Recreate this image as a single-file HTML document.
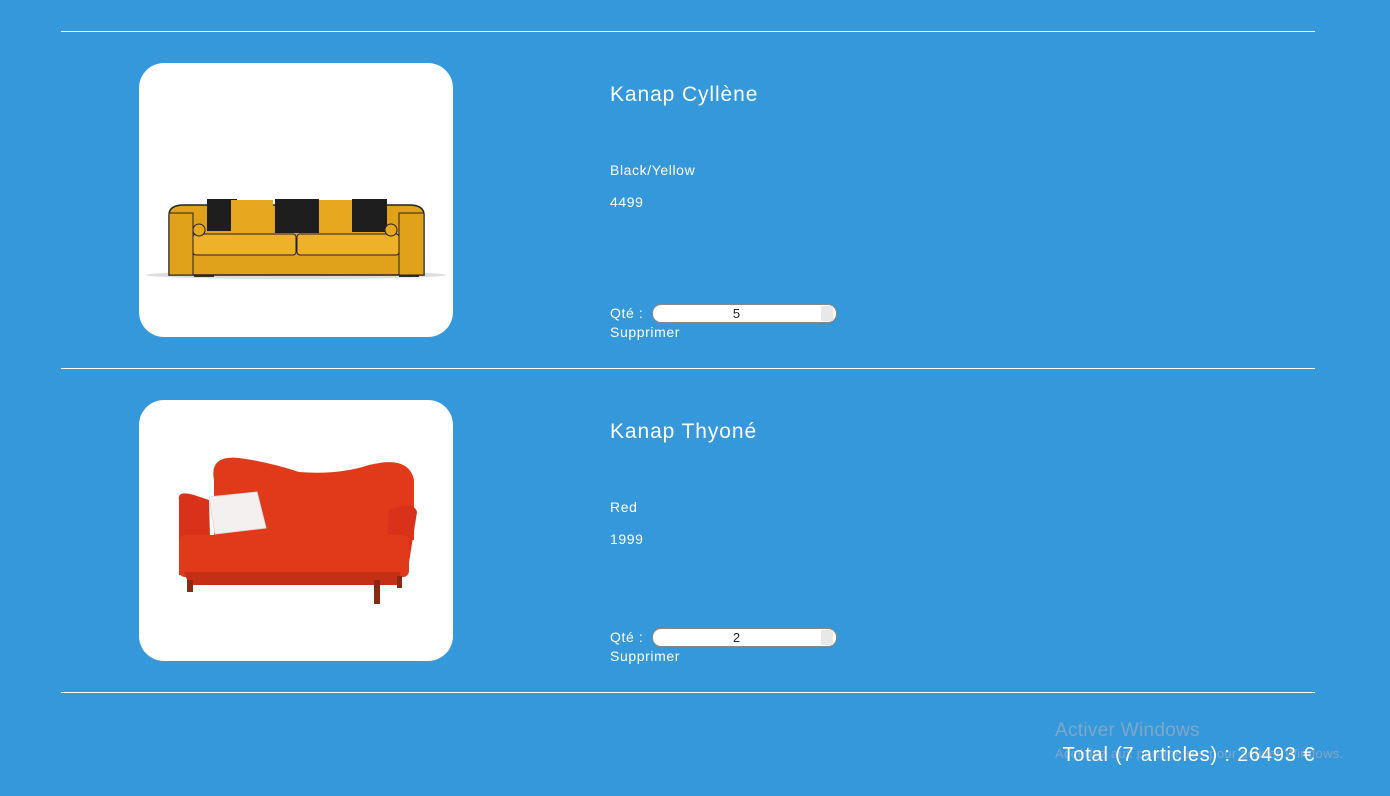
<!DOCTYPE html>
<html><head><meta charset="utf-8"><style>
body{margin:0;background:#3498db;width:1390px;height:796px;overflow:hidden;font-family:"Liberation Sans",sans-serif;color:#fff;position:relative}
.hr{position:absolute;left:61px;width:1254px;height:1px;background:#fff}
.img{position:absolute;left:139px;width:314px;background:#fff;border-radius:25px;overflow:hidden}
.t{position:absolute;left:610px;white-space:nowrap}
.title{font-size:21px;letter-spacing:0.9px}
.s{font-size:14px;letter-spacing:0.6px}
.inp{position:absolute;left:652px;width:183px;height:17px;background:#fff;border:1px solid #888;border-radius:9px;color:#222;font-size:13px;text-align:center;line-height:17px;text-indent:-16px}
.inp:after{content:"";position:absolute;right:3px;top:1px;width:12px;height:15px;background:#e8e8e8}
</style></head><body>
<div class="hr" style="top:31px"></div>
<div class="hr" style="top:368px"></div>
<div class="hr" style="top:692px"></div>

<div class="img" style="top:63px;height:274px">
<svg width="314" height="274" viewBox="0 0 314 274">
<ellipse cx="157" cy="212" rx="150" ry="4" fill="#ddd"/>
<rect x="55" y="210" width="20" height="4" fill="#333"/><rect x="260" y="210" width="20" height="4" fill="#333"/>
<path d="M30 152 Q30 142 45 142 L270 142 Q285 142 285 152 L285 212 L30 212 Z" fill="#e0a21b" stroke="#222" stroke-width="1.5"/>
<rect x="68" y="136" width="30" height="32" fill="#1e1e1e"/><rect x="92" y="137" width="42" height="34" fill="#e7a81f"/>
<rect x="136" y="136" width="44" height="34" fill="#1e1e1e"/><rect x="180" y="137" width="34" height="32" fill="#e7a81f"/>
<rect x="213" y="136" width="35" height="33" fill="#1e1e1e"/>
<rect x="54" y="171" width="103" height="21" rx="3" fill="#edb12a" stroke="#222"/>
<rect x="158" y="171" width="102" height="21" rx="3" fill="#edb12a" stroke="#222"/>
<rect x="30" y="150" width="24" height="62" fill="#e0a21b" stroke="#222"/>
<rect x="260" y="150" width="25" height="62" fill="#e0a21b" stroke="#222"/>
<circle cx="60" cy="167" r="6" fill="#e7a81f" stroke="#222"/><circle cx="252" cy="167" r="6" fill="#e7a81f" stroke="#222"/>
</svg></div>
<div class="t title" style="top:83px">Kanap Cyllène</div>
<div class="t s" style="top:162px">Black/Yellow</div>
<div class="t s" style="top:194px">4499</div>
<div class="t s" style="top:305px">Qté :</div>
<div class="inp" style="top:304px">5</div>
<div class="t s" style="top:324px">Supprimer</div>

<div class="img" style="top:400px;height:261px">
<svg width="314" height="261" viewBox="0 0 314 261">
<path d="M75 80 Q70 55 100 58 Q130 62 160 72 Q200 75 230 65 Q270 55 275 80 L275 140 L75 140 Z" fill="#e03a1a"/>
<path d="M40 100 Q38 90 55 95 L70 100 L72 175 L40 175 Z" fill="#d8331a"/>
<path d="M250 110 Q275 100 278 112 L268 175 L245 175 Z" fill="#d8331a"/>
<rect x="40" y="135" width="230" height="42" rx="6" fill="#e03a1a"/>
<path d="M45 172 L262 172 L258 185 L50 185 Z" fill="#c42f15"/>
<rect x="48" y="180" width="6" height="12" fill="#8a2a12"/><rect x="235" y="180" width="6" height="24" fill="#8a2a12"/><rect x="258" y="176" width="5" height="12" fill="#8a2a12"/>
<path d="M70 97 L118 92 L127 128 L76 134 Z" fill="#f4f0f0" stroke="#ddd"/>
</svg></div>
<div class="t title" style="top:420px">Kanap Thyoné</div>
<div class="t s" style="top:499px">Red</div>
<div class="t s" style="top:531px">1999</div>
<div class="t s" style="top:629px">Qté :</div>
<div class="inp" style="top:628px">2</div>
<div class="t s" style="top:648px">Supprimer</div>

<div style="position:absolute;left:1055px;top:720px;font-size:19px;color:#7fa7c9;letter-spacing:0.3px">Activer Windows</div>
<div style="position:absolute;left:1055px;top:746px;font-size:13px;color:#7fa7c9;letter-spacing:0.3px">Accédez aux paramètres pour activer Windows.</div>
<div style="position:absolute;right:75px;top:744px;font-size:20px;letter-spacing:0.8px">Total (7 articles) : 26493 €</div>
</body></html>
